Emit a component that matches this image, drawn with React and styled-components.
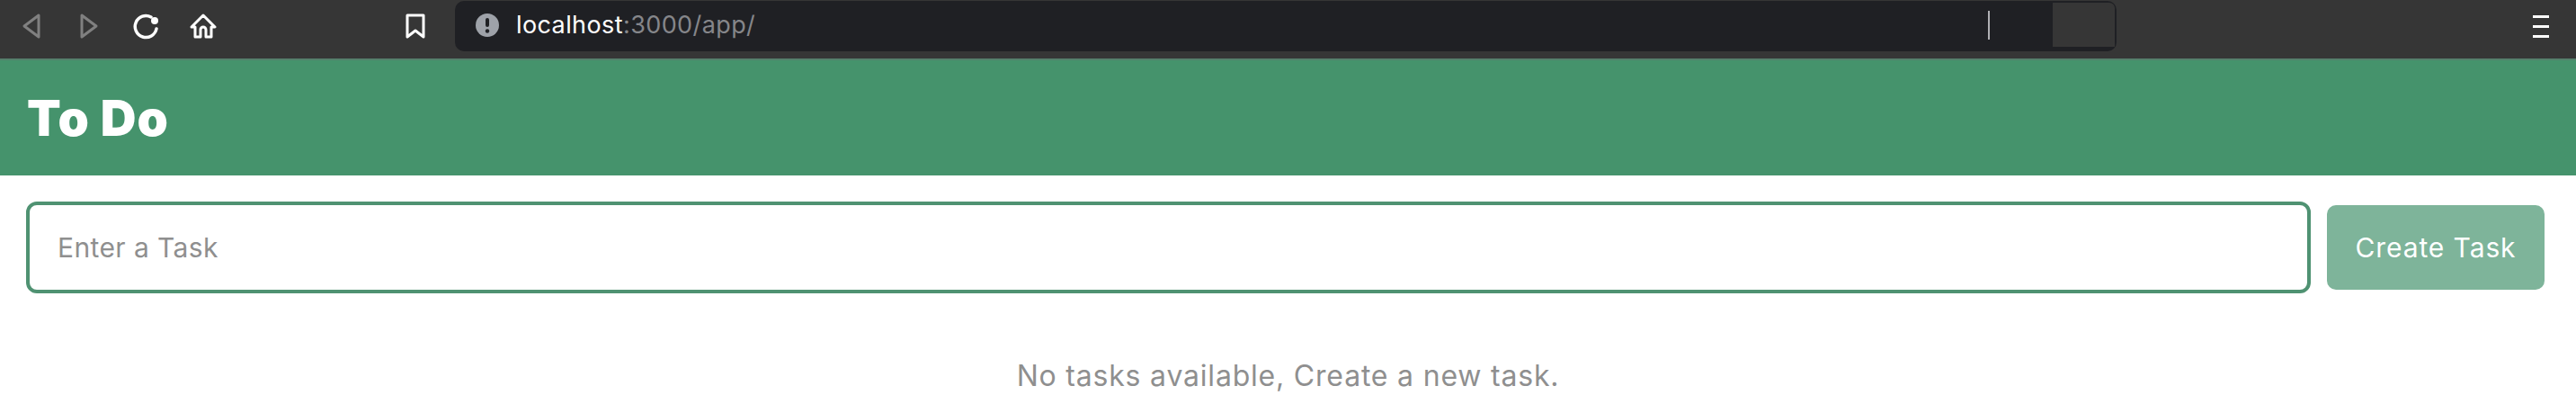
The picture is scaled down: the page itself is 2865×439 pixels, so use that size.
import { createGlobalStyle } from 'styled-components'
import styled from 'styled-components'

const GlobalStyle = createGlobalStyle`
  html, body {
    margin: 0;
    padding: 0;
    background: #ffffff;
    overflow: hidden;
  }
  * { box-sizing: border-box; }
`

const Page = styled.div`
  width: 2865px;
  height: 439px;
  font-family: Inter, "Noto Sans", sans-serif;
`

const Toolbar = styled.div`
  height: 67px;
  padding: 1px 0 8px 0;
  display: flex;
  align-items: stretch;
  background: #363636;
  border-bottom: 2px solid #55806c;
`

const NavIcon = styled.svg`
  width: ${(props) => props.$w}px;
  height: 30px;
  margin-left: ${(props) => props.$left}px;
  align-self: center;
  flex: none;
  fill: none;
  stroke: ${(props) => (props.$dim ? '#808080' : '#ffffff')};
  stroke-width: 3;
  stroke-linecap: round;
  stroke-linejoin: round;
`

const AddressBar = styled.div`
  width: 1848px;
  margin-left: 32px;
  padding: 2px 2px 5px 23px;
  display: flex;
  align-items: center;
  background: #1f2024;
  border-radius: 10px;
`

const InfoBadge = styled.svg`
  width: 26px;
  height: 26px;
  flex: none;
`

const Url = styled.div`
  margin-left: 19px;
  font-size: 27px;
  letter-spacing: 0.4px;
  color: #ffffff;
  white-space: nowrap;

  span {
    color: #85868a;
  }
`

const Caret = styled.div`
  width: 2px;
  height: 32px;
  margin-left: auto;
  background: #b0b0b4;
`

const ExtensionSlot = styled.div`
  width: 69px;
  height: 49px;
  margin-left: 70px;
  background: #363636;
  border-radius: 0 6px 0 0;
`

const Menu = styled.div`
  width: 18px;
  margin-left: auto;
  margin-right: 30px;
  align-self: center;
  display: flex;
  flex-direction: column;
  gap: 8px;

  i {
    display: block;
    height: 3px;
    background: #ffffff;
  }
`

const Header = styled.header`
  height: 128px;
  padding-left: 30px;
  display: flex;
  align-items: center;
  background: #45936c;
`

const Title = styled.h1`
  margin: 0;
  font-size: 55px;
  font-weight: 900;
  letter-spacing: 1px;
  color: #ffffff;
`

const TaskForm = styled.form`
  padding: 29px 35px 0 29px;
  display: flex;
  align-items: center;
  gap: 18px;
`

const TaskInput = styled.input`
  flex: 1;
  height: 102px;
  padding: 0 31px;
  border: 4px solid #4f9272;
  border-radius: 12px;
  outline: none;
  font-family: inherit;
  font-size: 30px;
  letter-spacing: 0.4px;
  color: #333333;

  &::placeholder {
    color: #8f8f8f;
    opacity: 1;
  }
`

const CreateButton = styled.button`
  width: 242px;
  height: 94px;
  border: none;
  border-radius: 10px;
  background: #7eb49a;
  font-family: inherit;
  font-size: 30px;
  letter-spacing: 0.9px;
  color: #ffffff;
`

const EmptyMessage = styled.p`
  margin: 72px 0 0;
  text-align: center;
  font-size: 32px;
  line-height: 40px;
  letter-spacing: 0.8px;
  color: #8f8f8f;
`

export default function App() {
  return (
    <Page>
      <GlobalStyle />
      <Toolbar>
        <NavIcon $w={22} $left={24} $dim viewBox="0 0 22 30">
          <path d="M19 3 L3 15 L19 27 Z" />
        </NavIcon>
        <NavIcon $w={22} $left={42} $dim viewBox="0 0 22 30">
          <path d="M3 3 L19 15 L3 27 Z" />
        </NavIcon>
        <NavIcon $w={30} $left={38} viewBox="0 0 30 30">
          <path d="M26 18 A 12 12 0 1 1 20 5" strokeWidth="3.5" />
          <circle cx="24" cy="9" r="4" fill="#ffffff" stroke="none" />
        </NavIcon>
        <NavIcon $w={30} $left={33} viewBox="0 0 30 30">
          <path d="M2 16 L15 3 L28 16 L24 16 L24 27 L18 27 L18 19 A 3 3 0 0 0 12 19 L12 27 L6 27 L6 16 Z" />
        </NavIcon>
        <NavIcon $w={24} $left={209} viewBox="0 0 24 30">
          <path d="M3 3 L21 3 L21 27 L12 20 L3 27 Z" />
        </NavIcon>
        <AddressBar>
          <InfoBadge viewBox="0 0 26 26">
            <circle cx="13" cy="13" r="13" fill="#9ea2a9" />
            <rect x="11" y="5" width="4" height="10" rx="2" fill="#1f2024" />
            <circle cx="13" cy="19.5" r="2.2" fill="#1f2024" />
          </InfoBadge>
          <Url>
            localhost<span>:3000/app/</span>
          </Url>
          <Caret />
          <ExtensionSlot />
        </AddressBar>
        <Menu>
          <i />
          <i />
          <i />
        </Menu>
      </Toolbar>
      <Header>
        <Title>To Do</Title>
      </Header>
      <TaskForm>
        <TaskInput placeholder="Enter a Task" />
        <CreateButton type="button">Create Task</CreateButton>
      </TaskForm>
      <EmptyMessage>No tasks available, Create a new task.</EmptyMessage>
    </Page>
  )
}
